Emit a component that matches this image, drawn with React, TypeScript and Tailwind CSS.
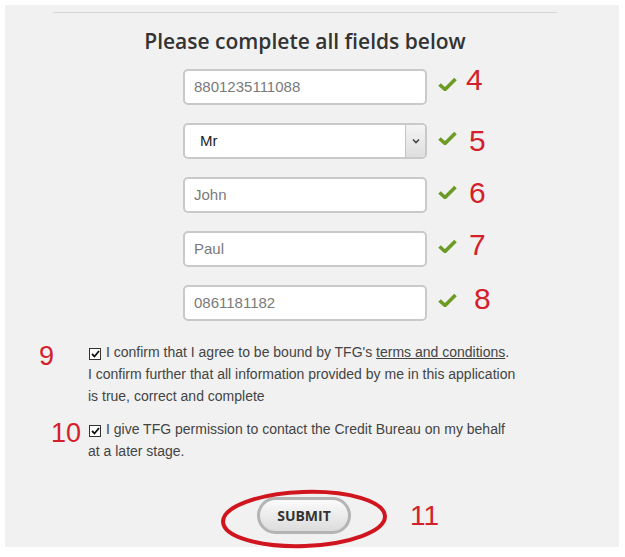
import React from "react";

const Check = () => (
  <svg width="19" height="14" viewBox="0 0 19 14" className="shrink-0">
    <path d="M1.5 7.5 L7 12.5 L17.5 2" fill="none" stroke="#6b9b25" strokeWidth="3.6" strokeLinejoin="round" />
  </svg>
);

const Box = () => (
  <span className="inline-flex w-[12px] h-[12px] border border-[#333] bg-white items-center justify-center align-[-1px] mr-[5px] ml-[1px]">
    <svg width="9" height="8" viewBox="0 0 9 8">
      <path d="M1 4 L3.5 6.5 L8 1" fill="none" stroke="#111" strokeWidth="1.8" />
    </svg>
  </span>
);

const Num = ({ n, cls }: { n: string; cls: string }) => (
  <span className={"text-[30px] leading-none text-[#d41f2c] font-['Liberation_Sans',Arial,sans-serif] " + cls}>{n}</span>
);

const inputCls =
  "w-[244px] h-[36px] rounded-[5px] border-2 border-[#c9c9c9] bg-white flex items-center pl-[9px] text-[15px] text-[#7a7a7a] font-['Liberation_Sans',Arial,sans-serif]";

const rowCls = "h-[36px] flex items-center ml-[178px]";

export default function App() {
  return (
    <div className="w-[625px] h-[557px] bg-white overflow-hidden">
      <div className="ml-[5px] mt-[5px] w-[614px] h-[542px] bg-[#f1f1f1] pt-[7px]">
        <div className="ml-[48px] w-[504px] h-[1px] bg-[#d6d6d6]" />
        <div className="w-[600px] text-center mt-[14px] text-[21px] leading-[28px] font-semibold text-[#333] font-['Open_Sans',sans-serif]">
          Please complete all fields below
        </div>

        <div className="mt-[14px] flex flex-col gap-[18px]">
          <div className={rowCls}>
            <div className={inputCls}>8801235111088</div>
            <span className="ml-[11px] mb-[6px]"><Check /></span>
            <Num n="4" cls="ml-[9px] mb-[14px]" />
          </div>
          <div className={rowCls}>
            <div className="w-[244px] h-[36px] rounded-[5px] border-2 border-[#c9c9c9] bg-white flex items-stretch overflow-hidden font-['Liberation_Sans',Arial,sans-serif]">
              <div className="flex-1 flex items-center pl-[15px] text-[15px] text-[#222]">Mr</div>
              <div className="w-[20px] border-l border-[#c4c4c4] bg-gradient-to-b from-[#f4f4f4] to-[#dedede] flex items-center justify-center">
                <svg width="8" height="6" viewBox="0 0 8 6">
                  <path d="M1 1.5 L4 4.5 L7 1.5" fill="none" stroke="#444" strokeWidth="1.6" />
                </svg>
              </div>
            </div>
            <span className="ml-[11px] mb-[6px]"><Check /></span>
            <Num n="5" cls="ml-[12px]" />
          </div>
          <div className={rowCls}>
            <div className={inputCls}>John</div>
            <span className="ml-[11px] mb-[6px]"><Check /></span>
            <Num n="6" cls="ml-[12px] mb-[4px]" />
          </div>
          <div className={rowCls}>
            <div className={inputCls}>Paul</div>
            <span className="ml-[11px] mb-[6px]"><Check /></span>
            <Num n="7" cls="ml-[12px] mb-[8px]" />
          </div>
          <div className={rowCls}>
            <div className={inputCls}>0861181182</div>
            <span className="ml-[11px] mb-[6px]"><Check /></span>
            <Num n="8" cls="ml-[17px] mb-[8px]" />
          </div>
        </div>

        <div className="mt-[20px] flex items-start">
          <div className="w-[83px] pl-[34px] mt-[2px] text-[27px] leading-none text-[#d41f2c] font-['Liberation_Sans',Arial,sans-serif]">9</div>
          <div className="w-[460px] text-[14px] leading-[22px] text-[#444] font-['Liberation_Sans',Arial,sans-serif]">
            <Box />I confirm that I agree to be bound by TFG's <span className="underline">terms and conditions</span>.
            <br />
            I confirm further that all information provided by me in this application
            <br />
            is true, correct and complete
          </div>
        </div>

        <div className="mt-[11px] flex items-start">
          <div className="w-[83px] pl-[46px] mt-[2px] text-[27px] leading-none text-[#d41f2c] font-['Liberation_Sans',Arial,sans-serif]">10</div>
          <div className="w-[460px] text-[14px] leading-[22px] text-[#444] font-['Liberation_Sans',Arial,sans-serif]">
            <Box />I give TFG permission to contact the Credit Bureau on my behalf
            <br />
            at a later stage.
          </div>
        </div>

        <div className="mt-[35px] flex items-center ml-[252px]">
          <div className="relative">
            <button className="w-[94px] h-[37px] rounded-full border-[3px] border-[#b4b4b4] bg-gradient-to-b from-[#fbfbfb] to-[#dcdcdc] text-[14px] font-bold text-[#333] font-['Open_Sans',sans-serif]">
              SUBMIT
            </button>
            <svg className="absolute left-[-37px] top-[-8px] pointer-events-none" width="170" height="62" viewBox="0 0 170 62">
              <ellipse cx="84" cy="30" rx="81" ry="27" fill="none" stroke="#d0151f" strokeWidth="4" transform="rotate(-2 84 30)" />
            </svg>
          </div>
          <span className="ml-[59px] text-[28px] leading-none text-[#d41f2c] font-['Liberation_Sans',Arial,sans-serif]">11</span>
        </div>
      </div>
    </div>
  );
}
